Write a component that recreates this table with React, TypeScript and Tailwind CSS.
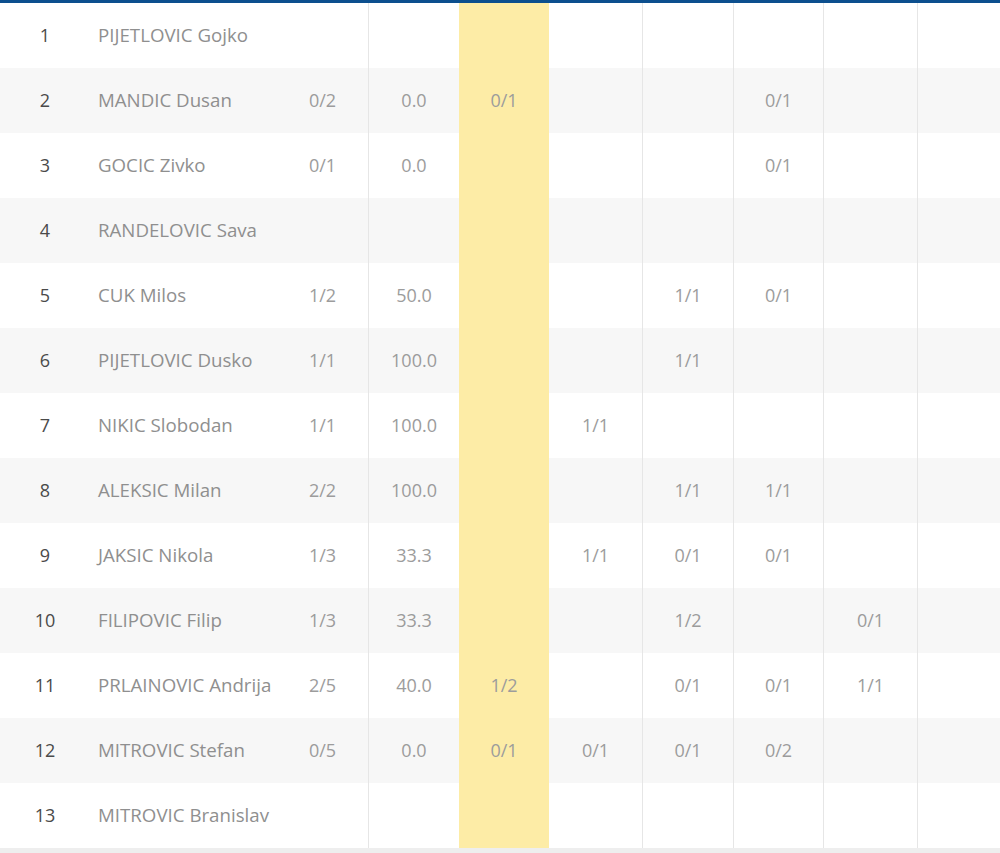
import React from 'react';

type Player = {
	rank: number;
	name: string;
	shots: string;
	pct: string;
	zones: string[];
};

const players: Player[] = [
	{ rank: 1, name: 'PIJETLOVIC Gojko', shots: '', pct: '', zones: ['', '', '', '', '', ''] },
	{ rank: 2, name: 'MANDIC Dusan', shots: '0/2', pct: '0.0', zones: ['0/1', '', '', '0/1', '', ''] },
	{ rank: 3, name: 'GOCIC Zivko', shots: '0/1', pct: '0.0', zones: ['', '', '', '0/1', '', ''] },
	{ rank: 4, name: 'RANDELOVIC Sava', shots: '', pct: '', zones: ['', '', '', '', '', ''] },
	{ rank: 5, name: 'CUK Milos', shots: '1/2', pct: '50.0', zones: ['', '', '1/1', '0/1', '', ''] },
	{ rank: 6, name: 'PIJETLOVIC Dusko', shots: '1/1', pct: '100.0', zones: ['', '', '1/1', '', '', ''] },
	{ rank: 7, name: 'NIKIC Slobodan', shots: '1/1', pct: '100.0', zones: ['', '1/1', '', '', '', ''] },
	{ rank: 8, name: 'ALEKSIC Milan', shots: '2/2', pct: '100.0', zones: ['', '', '1/1', '1/1', '', ''] },
	{ rank: 9, name: 'JAKSIC Nikola', shots: '1/3', pct: '33.3', zones: ['', '1/1', '0/1', '0/1', '', ''] },
	{ rank: 10, name: 'FILIPOVIC Filip', shots: '1/3', pct: '33.3', zones: ['', '', '1/2', '', '0/1', ''] },
	{ rank: 11, name: 'PRLAINOVIC Andrija', shots: '2/5', pct: '40.0', zones: ['1/2', '', '0/1', '0/1', '1/1', ''] },
	{ rank: 12, name: 'MITROVIC Stefan', shots: '0/5', pct: '0.0', zones: ['0/1', '0/1', '0/1', '0/2', '', ''] },
	{ rank: 13, name: 'MITROVIC Branislav', shots: '', pct: '', zones: ['', '', '', '', '', ''] },
];

export default function App() {
	return (
		<div
			className="w-[1000px] h-[853px] overflow-hidden bg-white"
			style={{ fontFamily: '"Open Sans", "Noto Sans", sans-serif' }}
		>
			<div className="h-[3px] bg-[#0c4f8e]" />
			<div className="h-px bg-[#fbf6e9]" />
			<div className="-mt-px">
				{players.map((p, i) => (
					<div
						key={p.rank}
						className={`flex h-[65px] items-center text-[18px] ${i % 2 === 1 ? 'bg-[#f7f7f7]' : 'bg-white'}`}
					>
						<div className="w-[90px] shrink-0 text-center text-[#4a4a4a]">{p.rank}</div>
						<div className="w-[187px] shrink-0 whitespace-nowrap pl-2 text-[18.7px] text-[#8f8f8f]">{p.name}</div>
						<div className="flex h-full w-[91px] shrink-0 items-center justify-center text-[#9c9c9c]">{p.shots}</div>
						<div className="flex h-full w-[91px] shrink-0 items-center justify-center border-l border-[#e6e6e6] text-[#9c9c9c]">{p.pct}</div>
						<div className="flex h-full w-[90px] shrink-0 items-center justify-center bg-[#fdeca6] text-[#9c9c9c]">{p.zones[0]}</div>
						<div className="flex h-full w-[93px] shrink-0 items-center justify-center text-[#9c9c9c]">{p.zones[1]}</div>
						<div className="flex h-full w-[91px] shrink-0 items-center justify-center border-l border-[#e6e6e6] text-[#9c9c9c]">{p.zones[2]}</div>
						<div className="flex h-full w-[90px] shrink-0 items-center justify-center border-l border-[#e6e6e6] text-[#9c9c9c]">{p.zones[3]}</div>
						<div className="flex h-full w-[94px] shrink-0 items-center justify-center border-l border-[#e6e6e6] text-[#9c9c9c]">{p.zones[4]}</div>
						<div className="flex h-full w-[90px] shrink-0 items-center justify-center border-l border-[#e6e6e6] text-[#9c9c9c]">{p.zones[5]}</div>
					</div>
				))}
			</div>
			<div className="h-[5px] bg-[#eeeeee]" />
		</div>
	);
}
